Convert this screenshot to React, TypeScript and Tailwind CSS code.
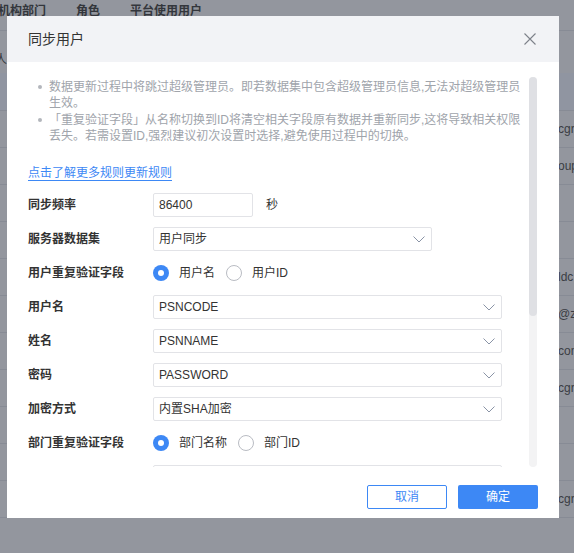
import React from "react";

const FONT = "font-['Liberation_Sans','Noto_Sans_CJK_SC',sans-serif]";

function Chevron() {
  return (
    <svg viewBox="0 0 12 7" className="h-[7px] w-[12px]" fill="none">
      <polyline points="0.5 0.5 6 6 11.5 0.5" stroke="#8a94a6" strokeWidth="1" />
    </svg>
  );
}

function Select({ value, width }: { value: string; width: string }) {
  return (
    <div className={`${width} flex h-[24px] items-center justify-between rounded-[2px] border border-[#e2e3e7] bg-white pl-[5px] pr-[6px] text-[12px] text-[#333]`}>
      <span>{value}</span>
      <Chevron />
    </div>
  );
}

function Radio({ checked, label }: { checked: boolean; label: string }) {
  return (
    <div className="flex items-center gap-[10px]">
      {checked ? (
        <div className="flex h-[16px] w-[16px] items-center justify-center rounded-full bg-[#3d88f5]">
          <div className="h-[6px] w-[6px] rounded-full bg-white" />
        </div>
      ) : (
        <div className="h-[16px] w-[16px] rounded-full border border-[#b9bcc3] bg-white" />
      )}
      <span className="text-[12px] text-[#333]">{label}</span>
    </div>
  );
}

function Row({ label, children }: { label: string; children: React.ReactNode }) {
  return (
    <div className="flex h-[24px] items-center">
      <div className="w-[125px] shrink-0 text-[12px] font-bold text-[#333]">{label}</div>
      {children}
    </div>
  );
}

export default function App() {
  const rightTexts: Record<number, string> = { 0: "cgr", 1: "oup", 4: "ldc", 5: "@zl", 6: "con", 7: "cgr", 10: "cgr" };

  return (
    <div className={`relative h-[553px] w-[574px] overflow-hidden bg-[#93969e] ${FONT}`}>
      {/* Page behind the overlay */}
      <div className="flex h-[31px] items-start border-b border-[#878b95] pt-[3px] text-[12px] leading-[16px] font-bold text-[#33363c]">
        <span className="-ml-[2px] w-[78px]">机构部门</span>
        <span className="w-[54px]">角色</span>
        <span>平台使用用户</span>
      </div>
      <div className="h-[42px] pt-[20px] text-[12px] text-[#33363c]">
        <span className="-ml-[5px]">人</span>
      </div>
      <div className="h-[38px] border-b border-[#878b95] bg-[#9095a1]" />
      {Array.from({ length: 11 }).map((_, i) => (
        <div key={i} className="flex h-[37px] items-center justify-end border-b border-[#878b95] text-[12px] text-[#3a3d44]">
          <span className="w-[16px] overflow-hidden whitespace-nowrap">{rightTexts[i] ?? ""}</span>
        </div>
      ))}

      {/* Modal */}
      <div className="absolute left-[7px] top-[16px] flex h-[502px] w-[552px] flex-col bg-white">
        <div className="flex h-[46px] shrink-0 items-center justify-between bg-[#f2f3f6] pl-[21px] pr-[23px]">
          <span className="text-[14px] text-[#333]">同步用户</span>
          <svg viewBox="0 0 12 12" className="h-[12px] w-[12px]" fill="none">
            <path d="M0.5 0.5L11.5 11.5M11.5 0.5L0.5 11.5" stroke="#7d828a" strokeWidth="1.1" />
          </svg>
        </div>

        <div className="relative flex-1 overflow-hidden">
          <div className="pl-[21px] pr-[36px] pt-[17px]">
            <ul className="pl-[10px] text-[12px] leading-[16px] text-[#a0a4ab]">
              <li className="relative pl-[11px]">
                <span className="absolute left-0 top-[6px] h-[4px] w-[4px] rounded-full bg-[#b3b6bc]" />
                数据更新过程中将跳过超级管理员。即若数据集中包含超级管理员信息,无法对超级管理员生效。
              </li>
              <li className="relative pl-[11px] pt-[1px]">
                <span className="absolute left-0 top-[7px] h-[4px] w-[4px] rounded-full bg-[#b3b6bc]" />
                「重复验证字段」从名称切换到ID将清空相关字段原有数据并重新同步,这将导致相关权限丢失。若需设置ID,强烈建议初次设置时选择,避免使用过程中的切换。
              </li>
            </ul>

            <div className="mt-[16px]">
              <span className="border-b border-[#3d88f5] text-[12px] leading-[16px] text-[#3d88f5]">点击了解更多规则更新规则</span>
            </div>

            <div className="mt-[9px] flex flex-col gap-[10px]">
              <Row label="同步频率">
                <div className="flex h-[24px] w-[100px] items-center rounded-[2px] border border-[#e2e3e7] pl-[5px] text-[12px] text-[#333]">86400</div>
                <span className="ml-[13px] text-[12px] text-[#333]">秒</span>
              </Row>
              <Row label="服务器数据集">
                <Select value="用户同步" width="w-[279px]" />
              </Row>
              <Row label="用户重复验证字段">
                <div className="flex items-center gap-[11px]">
                  <Radio checked label="用户名" />
                  <Radio checked={false} label="用户ID" />
                </div>
              </Row>
              <Row label="用户名">
                <Select value="PSNCODE" width="w-[349px]" />
              </Row>
              <Row label="姓名">
                <Select value="PSNNAME" width="w-[349px]" />
              </Row>
              <Row label="密码">
                <Select value="PASSWORD" width="w-[349px]" />
              </Row>
              <Row label="加密方式">
                <Select value="内置SHA加密" width="w-[349px]" />
              </Row>
              <Row label="部门重复验证字段">
                <div className="flex items-center gap-[11px]">
                  <Radio checked label="部门名称" />
                  <Radio checked={false} label="部门ID" />
                </div>
              </Row>
              <Row label="">
                <Select value="" width="w-[349px]" />
              </Row>
            </div>
          </div>

          {/* Scrollbar */}
          <div className="absolute right-[22px] top-[15px] h-[390px] w-[8px] rounded-full bg-[#f3f3f4]">
            <div className="h-[239px] w-[8px] rounded-full bg-[#dfe0e4]" />
          </div>
        </div>

        <div className="flex h-[51px] shrink-0 items-start justify-end gap-[11px] pr-[21px] pt-[18px]">
          <button className="flex h-[24px] w-[80px] items-center justify-center rounded-[2px] border border-[#3d88f5] bg-white text-[12px] text-[#3d88f5]">取消</button>
          <button className="flex h-[24px] w-[80px] items-center justify-center rounded-[2px] bg-[#3d88f5] text-[12px] text-white">确定</button>
        </div>
      </div>
    </div>
  );
}
